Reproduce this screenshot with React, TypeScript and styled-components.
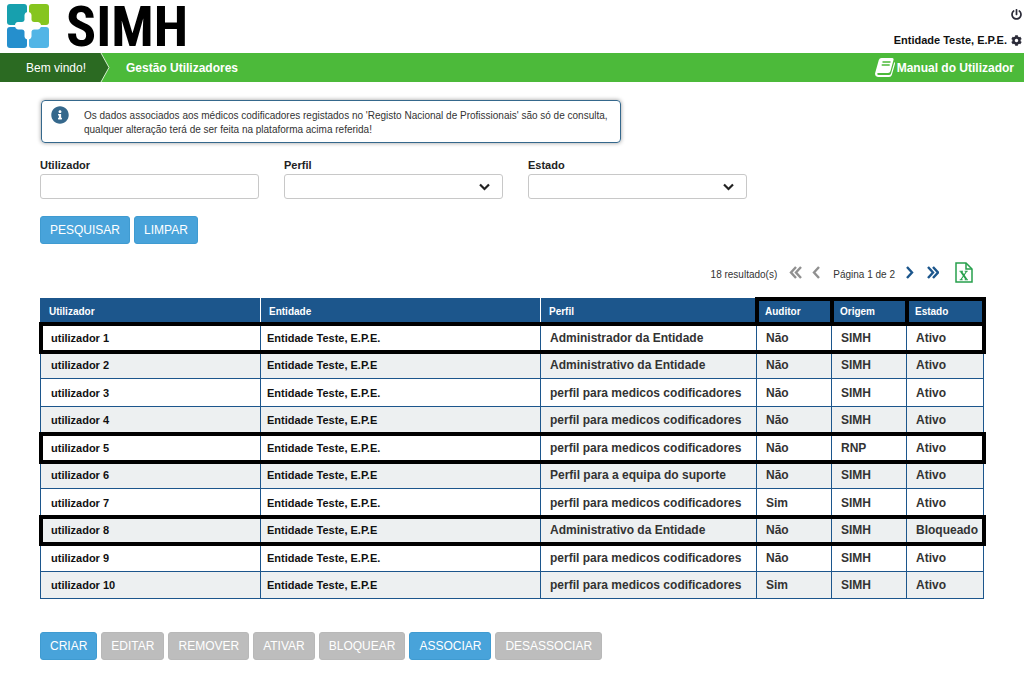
import React from "react";
import styled, { createGlobalStyle } from "styled-components";
import { FaPowerOff, FaCog, FaInfoCircle } from "react-icons/fa";

const GlobalStyle = createGlobalStyle`
  *, *::before, *::after { box-sizing: border-box; }
  body {
    margin: 0;
    background: #fff;
    color: #333;
    font-family: "Liberation Sans", Arial, sans-serif;
    font-size: 12px;
  }
`;

const Header = styled.header`
  display: flex;
  justify-content: space-between;
  height: 53px;
  padding: 4px 2px 0 6px;
`;

const Brand = styled.div`
  display: flex;
  gap: 16px;
`;

const BrandName = styled.span`
  color: #000;
  font-family: "Liberation Sans Narrow", "Arial Narrow", "Roboto Condensed", "Open Sans Condensed",
    "Noto Sans Condensed", "Noto Sans ExtraCondensed", "Liberation Sans", sans-serif;
  font-size: 56px;
  font-weight: 700;
  line-height: 46px;
`;

const Account = styled.div`
  display: flex;
  flex-direction: column;
  align-items: flex-end;
  gap: 13px;
  padding-top: 5px;
`;

const IconButton = styled.button`
  display: flex;
  padding: 0;
  border: 0;
  background: none;
  color: #2b2b38;
  font-size: 11px;
`;

const Entity = styled.div`
  display: flex;
  align-items: center;
  gap: 4px;
  color: #111;
  font-size: 11px;
  font-weight: 700;
  line-height: 14px;
`;

const NavBar = styled.nav`
  display: flex;
  align-items: center;
  height: 29px;
  background: #4cba3a;
  color: #fff;
  font-size: 12px;
`;

const Welcome = styled.div`
  position: relative;
  display: flex;
  align-items: center;
  width: 110px;
  height: 100%;
  padding-left: 26px;
`;

const WelcomeShape = styled.svg`
  position: absolute;
  inset: 0;
  width: 110px;
  height: 29px;
`;

const WelcomeText = styled.span`
  position: relative;
`;

const Crumb = styled.a`
  padding-left: 16px;
  color: #fff;
  font-weight: 700;
  text-decoration: none;
`;

const ManualLink = styled.a`
  display: flex;
  align-items: center;
  gap: 2px;
  margin-left: auto;
  padding-right: 10px;
  color: #fff;
  font-weight: 700;
  text-decoration: none;
`;

const Main = styled.main`
  padding: 18px 41px 16px 40px;
`;

const Notice = styled.div`
  display: flex;
  gap: 15px;
  width: fit-content;
  max-width: 580px;
  margin-left: 1px;
  padding: 5px 10px 3px 9px;
  border: 1px solid #35688c;
  border-radius: 4px;
  box-shadow: 0 0 4px rgba(0, 0, 0, 0.4);
  font-size: 10px;
  line-height: 14px;

  svg { flex: none; color: #35688c; }
  p { margin: 3px 0 2px; }
`;

const Filters = styled.form`
  display: grid;
  grid-template-columns: repeat(3, minmax(0, 219px));
  column-gap: 25px;
  margin-top: 15px;
`;

const Field = styled.label`
  display: flex;
  flex-direction: column;
  gap: 2px;
  color: #222;
  font-size: 11px;
  font-weight: 700;
  line-height: 14px;
`;

const TextInput = styled.input`
  width: 100%;
  height: 25px;
  padding: 0 8px;
  border: 1px solid #c8c8c8;
  border-radius: 3px;
  background: #fff;
`;

const SelectWrap = styled.span`
  position: relative;
  display: block;

  svg {
    position: absolute;
    top: 9px;
    right: 13px;
    pointer-events: none;
  }
`;

const Select = styled.select`
  display: block;
  width: 100%;
  height: 25px;
  padding: 0 30px 0 8px;
  border: 1px solid #c8c8c8;
  border-radius: 3px;
  background: #fff;
  appearance: none;
`;

const ButtonRow = styled.div<{ $top: number }>`
  display: flex;
  flex-wrap: wrap;
  gap: 4px;
  margin-top: ${(p) => p.$top}px;
`;

const Button = styled.button`
  height: 28px;
  padding: 0 9px;
  border: 1px solid #3f9bd1;
  border-radius: 3px;
  background: #48a3da;
  color: #fff;
  font-family: inherit;
  font-size: 12px;

  &:disabled {
    border-color: #b8b8b8;
    background: #bdbdbd;
  }
`;

const Pager = styled.div`
  display: flex;
  align-items: center;
  justify-content: flex-end;
  margin-top: 17px;
  padding-right: 10px;
  height: 22px;
  font-size: 10px;
`;

const PagerText = styled.span<{ $before?: number }>`
  margin-left: ${(p) => p.$before ?? 0}px;
  padding-top: 4px;
`;

const PagerButton = styled.button<{ $before: number }>`
  display: flex;
  margin-left: ${(p) => p.$before}px;
  padding: 0;
  border: 0;
  background: none;
  color: #1c568c;

  &:disabled { color: #909090; }
`;

const Table = styled.table`
  width: 100%;
  margin-top: 15px;
  table-layout: fixed;
  border-collapse: collapse;
  border: 1px solid #1c568c;
`;

const HeadCell = styled.th<{ $width: number; $marked?: boolean }>`
  width: ${(p) => p.$width}px;
  height: 25px;
  padding: 0 8px;
  border-right: 1px solid #fff;
  background: #1c568c;
  color: #fff;
  font-size: 10px;
  text-align: left;
  ${(p) => p.$marked && "outline: 4px solid #000; outline-offset: -2px;"}
`;

const Row = styled.tr<{ $marked?: boolean }>`
  height: 28px;
  ${(p) => p.$marked && "outline: 4px solid #000; outline-offset: -2px;"}

  &:nth-child(even) {
    height: 27px;
    background: #edf0f1;
  }
`;

const Cell = styled.td<{ $pad?: number }>`
  padding: 0 0 0 ${(p) => p.$pad ?? 9}px;
  border: 1px solid #1c568c;
  color: ${(p) => (p.$pad ? "#111" : "#333")};
  font-size: ${(p) => (p.$pad ? 11 : 12)}px;
  font-weight: 700;
  line-height: 14px;
  white-space: nowrap;
`;

const Logo = () => (
  <svg width="44" height="44" viewBox="0 0 44 44" aria-hidden="true">
    <rect x="1" y="0" width="20" height="21" rx="3" fill="#17a0ae" />
    <rect x="23" y="0" width="20" height="21" rx="3" fill="#86c51f" />
    <rect x="1" y="23" width="20" height="21" rx="3" fill="#258fcd" />
    <rect x="23" y="23" width="20" height="21" rx="3" fill="#52b5e6" />
    <path
      d="M22 8q3 0 3.500 3v5q.5 2 2.500 2h4q3 .5 3 3.500t-3 4h-4q-2 0-2.500 2v5q-.5 3-3.500 3t-3.500-3v-5q-.5-2-2.500-2h-4q-3-.5-3-4t3-3.500h4q2 0 2.500-2v-5q.5-3 3.500-3z"
      fill="#fff"
    />
  </svg>
);

const Chevron = ({ double, flip }: { double?: boolean; flip?: boolean }) => (
  <svg width={double ? 13 : 9} height="13" viewBox={double ? "0 0 13 13" : "0 0 9 13"} aria-hidden="true">
    <g fill="none" stroke="currentColor" strokeWidth="2.400">
      <path d={flip ? "M2 1l5 5.500-5 5.500" : "M7 1L2 6.500 7 12"} />
      {double && <path d={flip ? "M7 1l5 5.500-5 5.500" : "M12 1L7 6.500l5 5.500"} />}
    </g>
  </svg>
);

const SelectArrow = () => (
  <svg width="11" height="8" viewBox="0 0 11 8" aria-hidden="true">
    <path d="M1 1.500l4.500 4.500L10 1.500" fill="none" stroke="#222" strokeWidth="2.200" />
  </svg>
);

const ExcelIcon = () => (
  <svg width="18" height="21" viewBox="0 0 18 21" aria-hidden="true">
    <g fill="none" stroke="#27a04c">
      <path d="M1 1h10l6 6v13H1z" strokeWidth="1.500" />
      <path d="M11 1v6h6" strokeWidth="1.500" />
      <path d="M6 9.500l5.500 8" strokeWidth="2" />
      <path d="M11.500 9.500L6 17.500M4.500 9.300h3.500M9.700 9.300h3M4.700 17.700h3M9.700 17.700h3.300" strokeWidth="1.100" />
    </g>
  </svg>
);

const columns = [
  { label: "Utilizador", width: 220 },
  { label: "Entidade", width: 280 },
  { label: "Perfil", width: 216 },
  { label: "Auditor", width: 75, marked: true },
  { label: "Origem", width: 75, marked: true },
  { label: "Estado", width: 77, marked: true },
];

const medicos = "perfil para medicos codificadores";

const users = [
  ["utilizador 1", "Entidade Teste, E.P.E.", "Administrador da Entidade", "Não", "SIMH", "Ativo"],
  ["utilizador 2", "Entidade Teste, E.P.E", "Administrativo da Entidade", "Não", "SIMH", "Ativo"],
  ["utilizador 3", "Entidade Teste, E.P.E.", medicos, "Não", "SIMH", "Ativo"],
  ["utilizador 4", "Entidade Teste, E.P.E", medicos, "Não", "SIMH", "Ativo"],
  ["utilizador 5", "Entidade Teste, E.P.E.", medicos, "Não", "RNP", "Ativo"],
  ["utilizador 6", "Entidade Teste, E.P.E", "Perfil para a equipa do suporte", "Não", "SIMH", "Ativo"],
  ["utilizador 7", "Entidade Teste, E.P.E.", medicos, "Sim", "SIMH", "Ativo"],
  ["utilizador 8", "Entidade Teste, E.P.E", "Administrativo da Entidade", "Não", "SIMH", "Bloqueado"],
  ["utilizador 9", "Entidade Teste, E.P.E.", medicos, "Não", "SIMH", "Ativo"],
  ["utilizador 10", "Entidade Teste, E.P.E", medicos, "Sim", "SIMH", "Ativo"],
];

const markedRows = [0, 4, 7];
const cellPads: (number | undefined)[] = [10, 6];

const actions = [
  { label: "CRIAR", enabled: true },
  { label: "EDITAR" },
  { label: "REMOVER" },
  { label: "ATIVAR" },
  { label: "BLOQUEAR" },
  { label: "ASSOCIAR", enabled: true },
  { label: "DESASSOCIAR" },
];

export default function App() {
  return (
    <>
      <GlobalStyle />
      <Header>
        <Brand>
          <Logo />
          <BrandName>SIMH</BrandName>
        </Brand>
        <Account>
          <IconButton aria-label="Sair"><FaPowerOff /></IconButton>
          <Entity>
            Entidade Teste, E.P.E.
            <IconButton aria-label="Definições"><FaCog /></IconButton>
          </Entity>
        </Account>
      </Header>
      <NavBar>
        <Welcome>
          <WelcomeShape viewBox="0 0 110 29" aria-hidden="true">
            <path d="M0 0h101l8 14.500L101 29H0z" fill="#2b6a22" />
            <path d="M101 0l8 14.500L101 29" fill="none" stroke="#d5efcf" />
          </WelcomeShape>
          <WelcomeText>Bem vindo!</WelcomeText>
        </Welcome>
        <Crumb href="#utilizadores">Gestão Utilizadores</Crumb>
        <ManualLink href="#manual">
          <svg width="20" height="19" viewBox="0 0 20 19" aria-hidden="true">
            <path d="M6.500 0H17q2 0 1.500 2l-3 11q-.5 2-2.500 2H3.500q-1.500 0-1.300 1 .2 1 1.300 1H14q1.500 0 2-1.500L19.300 4q1 .7.500 2.500L16.800 17q-.6 2-2.800 2H3q-3-.5-3-3.500L3.800 2Q4.500 0 6.500 0z" fill="#fff" />
            <path d="M7.500 4h8M6.700 7h8" stroke="#4cba3a" strokeWidth="1.300" />
          </svg>
          Manual do Utilizador
        </ManualLink>
      </NavBar>
      <Main>
        <Notice role="note">
          <FaInfoCircle size={18} />
          <p>
            Os dados associados aos médicos codificadores registados no 'Registo Nacional de Profissionais' são só de
            consulta, qualquer alteração terá de ser feita na plataforma acima referida!
          </p>
        </Notice>
        <Filters id="filtros" onSubmit={(e) => e.preventDefault()}>
          <Field>
            Utilizador
            <TextInput type="text" />
          </Field>
          <Field>
            Perfil
            <SelectWrap>
              <Select><option value="" /></Select>
              <SelectArrow />
            </SelectWrap>
          </Field>
          <Field>
            Estado
            <SelectWrap>
              <Select><option value="" /></Select>
              <SelectArrow />
            </SelectWrap>
          </Field>
        </Filters>
        <ButtonRow $top={17}>
          <Button type="submit" form="filtros">PESQUISAR</Button>
          <Button type="reset" form="filtros">LIMPAR</Button>
        </ButtonRow>
        <Pager>
          <PagerText>18 resultado(s)</PagerText>
          <PagerButton $before={12} disabled aria-label="Primeira página"><Chevron double /></PagerButton>
          <PagerButton $before={10} disabled aria-label="Página anterior"><Chevron /></PagerButton>
          <PagerText $before={12}>Página 1 de 2</PagerText>
          <PagerButton $before={10} aria-label="Página seguinte"><Chevron flip /></PagerButton>
          <PagerButton $before={12} aria-label="Última página"><Chevron double flip /></PagerButton>
          <PagerButton $before={16} aria-label="Exportar para Excel"><ExcelIcon /></PagerButton>
        </Pager>
        <Table>
          <thead>
            <tr>
              {columns.map((c) => (
                <HeadCell key={c.label} $width={c.width} $marked={c.marked}>{c.label}</HeadCell>
              ))}
            </tr>
          </thead>
          <tbody>
            {users.map((user, i) => (
              <Row key={user[0]} $marked={markedRows.includes(i)}>
                {user.map((value, j) => (
                  <Cell key={j} $pad={cellPads[j]}>{value}</Cell>
                ))}
              </Row>
            ))}
          </tbody>
        </Table>
        <ButtonRow $top={33}>
          {actions.map((a) => (
            <Button key={a.label} type="button" disabled={!a.enabled}>{a.label}</Button>
          ))}
        </ButtonRow>
      </Main>
    </>
  );
}
